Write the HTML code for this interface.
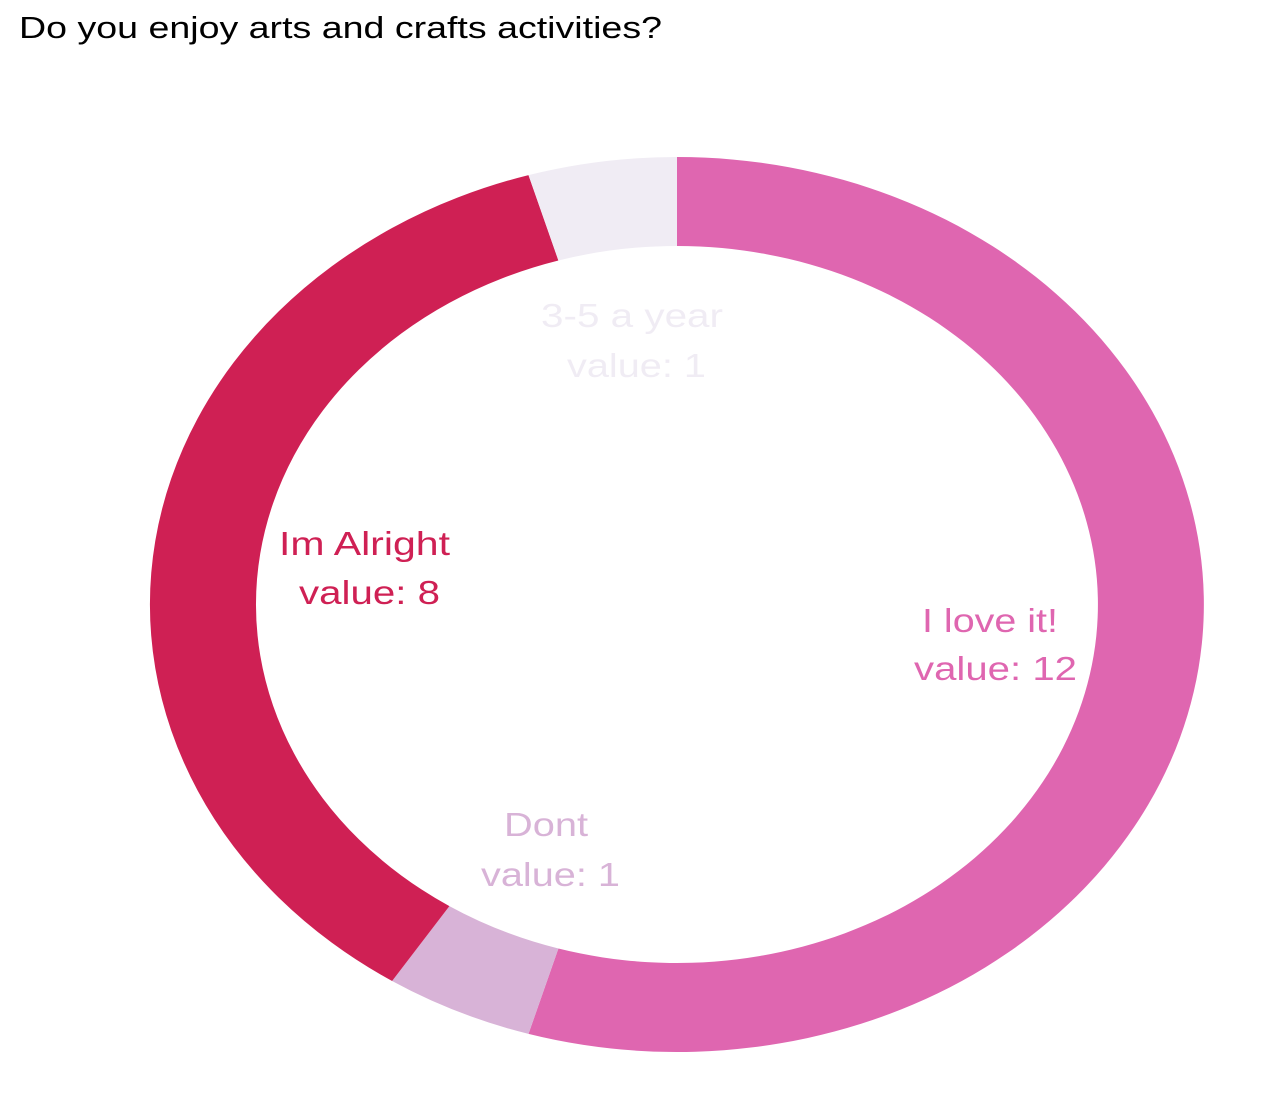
<!DOCTYPE html>
<html><head><meta charset="utf-8"><style>
html,body{margin:0;padding:0;background:#fff;}
svg{display:block;}
text{font-family:"Liberation Sans",Arial,sans-serif;}
</style></head><body>
<svg width="1280" height="1106" viewBox="0 0 1280 1106" xmlns="http://www.w3.org/2000/svg">
<rect width="1280" height="1106" fill="#fff"/>
<text x="19" y="38" font-size="31" fill="#000" textLength="643" lengthAdjust="spacingAndGlyphs">Do you enjoy arts and crafts activities?</text>
<path d="M677 157 A527 447.5 0 1 1 528.5 1033.9 L558.4 948.5 A421 358.5 0 1 0 677 246 Z" fill="#df66b0"/>
<path d="M528.5 1033.9 A527 447.5 0 0 1 392.1 981 L449.4 906.1 A421 358.5 0 0 0 558.4 948.5 Z" fill="#d8b3d7"/>
<path d="M392.1 981 A527 447.5 0 0 1 528.5 175.1 L558.4 260.5 A421 358.5 0 0 0 449.4 906.1 Z" fill="#cf2054"/>
<path d="M528.5 175.1 A527 447.5 0 0 1 677 157 L677 246 A421 358.5 0 0 0 558.4 260.5 Z" fill="#f0ecf4"/>
<g font-size="33" lengthAdjust="spacingAndGlyphs">
<text x="541" y="327" fill="#f0ecf4" textLength="182" lengthAdjust="spacingAndGlyphs">3-5 a year</text>
<text x="567" y="377" fill="#f0ecf4" textLength="139" lengthAdjust="spacingAndGlyphs">value: 1</text>
<text x="279" y="555" fill="#cf2054" textLength="171" lengthAdjust="spacingAndGlyphs">Im Alright</text>
<text x="299" y="604" fill="#cf2054" textLength="141" lengthAdjust="spacingAndGlyphs">value: 8</text>
<text x="922" y="632" fill="#df66b0" textLength="136" lengthAdjust="spacingAndGlyphs">I love it!</text>
<text x="914" y="680" fill="#df66b0" textLength="163" lengthAdjust="spacingAndGlyphs">value: 12</text>
<text x="504" y="836" fill="#d8b3d7" textLength="84" lengthAdjust="spacingAndGlyphs">Dont</text>
<text x="481" y="886" fill="#d8b3d7" textLength="139" lengthAdjust="spacingAndGlyphs">value: 1</text>
</g>
</svg>
</body></html>
